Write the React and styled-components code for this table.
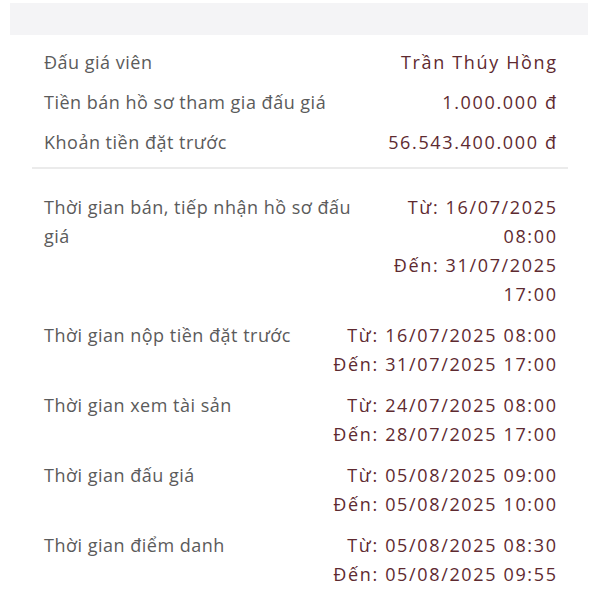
import React from 'react';
import styled, { createGlobalStyle } from 'styled-components';

const GlobalStyle = createGlobalStyle`
  html, body {
    margin: 0;
    padding: 0;
    background: #ffffff;
  }
  body {
    font-family: "Open Sans", "Noto Sans", sans-serif;
    -webkit-font-smoothing: antialiased;
  }
`;

const Page = styled.div`
  width: 600px;
  height: 600px;
  overflow: hidden;
  background: #fff;
`;

const CutRow = styled.div`
  height: 3px;
  overflow: hidden;
  display: flex;
  justify-content: flex-end;
  padding-right: 105px;
`;

const CutText = styled.span`
  font-size: 17px;
  line-height: 20px;
  margin-top: -16px;
  color: #7a7a7a;
  letter-spacing: 1px;
`;

const TopBand = styled.div`
  margin: 0 12px 0 10px;
  height: 32px;
  background: #f4f4f6;
`;

const Section = styled.div`
  padding: 7px 44px 0 44px;
`;

const Row = styled.div`
  display: flex;
  justify-content: space-between;
  align-items: flex-start;
  gap: 20px;
  padding: 5px 0;
  line-height: 30px;
`;

const Label = styled.div`
  flex: 1 1 auto;
  font-size: 18px;
  letter-spacing: 0.5px;
  color: #5b5b5b;
  max-width: ${p => (p.wrapAt ? `${p.wrapAt}px` : 'none')};
`;

const Value = styled.div`
  flex: 0 0 auto;
  font-size: 18px;
  letter-spacing: 1.65px;
  margin-right: -1.65px;
  color: #5e2a30;
  text-align: right;
  max-width: ${p => (p.narrow ? '185px' : 'none')};
`;

const Divider = styled.div`
  height: 2px;
  background: #ebebeb;
  margin: 5px 32px 24px 32px;
`;

const TimeGroup = styled.div`
  padding: 0 44px;
  display: flex;
  flex-direction: column;
  gap: 12px;
`;

const TimeRow = styled(Row)`
  padding: 0;
  line-height: 29px;
`;

const info = [
  { label: 'Đấu giá viên', value: 'Trần Thúy Hồng' },
  { label: 'Tiền bán hồ sơ tham gia đấu giá', value: '1.000.000 đ' },
  { label: 'Khoản tiền đặt trước', value: '56.543.400.000 đ' },
];

const times = [
  { label: 'Thời gian bán, tiếp nhận hồ sơ đấu giá', from: '16/07/2025 08:00', to: '31/07/2025 17:00', narrow: true },
  { label: 'Thời gian nộp tiền đặt trước', from: '16/07/2025 08:00', to: '31/07/2025 17:00' },
  { label: 'Thời gian xem tài sản', from: '24/07/2025 08:00', to: '28/07/2025 17:00' },
  { label: 'Thời gian đấu giá', from: '05/08/2025 09:00', to: '05/08/2025 10:00' },
  { label: 'Thời gian điểm danh', from: '05/08/2025 08:30', to: '05/08/2025 09:55' },
];

export default function App() {
  return (
    <Page>
      <GlobalStyle />
      <CutRow>
        <CutText>Đến: 31/07/2025</CutText>
      </CutRow>
      <TopBand />

      <Section>
        {info.map(item => (
          <Row key={item.label}>
            <Label>{item.label}</Label>
            <Value>{item.value}</Value>
          </Row>
        ))}
      </Section>

      <Divider />

      <TimeGroup>
        {times.map(item => (
          <TimeRow key={item.label}>
            <Label wrapAt={item.narrow ? 320 : 0}>{item.label}</Label>
            <Value narrow={item.narrow}>
              <div>Từ: {item.from}</div>
              <div>Đến: {item.to}</div>
            </Value>
          </TimeRow>
        ))}
      </TimeGroup>
    </Page>
  );
}
